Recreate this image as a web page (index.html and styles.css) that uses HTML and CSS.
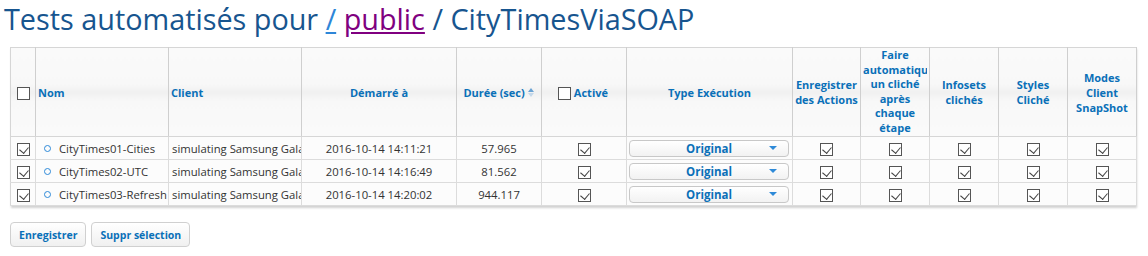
FILE: index.html
```html
<!DOCTYPE html>
<html lang="fr">

<head>
    <meta charset="UTF-8">
    <title>Tests automatisés</title>
    <link rel="stylesheet" href="styles.css">
</head>

<body>
    <h1 class="title">Tests automatisés pour <a href="#" class="root">/</a> <a href="#" class="visited">public</a> / CityTimesViaSOAP</h1>

    <div class="grid">
        <table>
            <colgroup>
                <col style="width:25px">
                <col style="width:133px">
                <col style="width:133px">
                <col style="width:155px">
                <col style="width:85px">
                <col style="width:85px">
                <col style="width:166px">
                <col style="width:68px">
                <col style="width:69px">
                <col style="width:69px">
                <col style="width:69px">
                <col style="width:69px">
            </colgroup>
            <thead>
                <tr>
                    <th class="center"><span class="box"></span></th>
                    <th class="left">Nom</th>
                    <th class="left">Client</th>
                    <th>Démarré à</th>
                    <th>Durée (sec) <span class="sort"><i class="up"></i><i class="down"></i></span></th>
                    <th class="left active"><span class="box"></span> Activé</th>
                    <th>Type Exécution</th>
                    <th>Enregistrer des Actions</th>
                    <th><div class="clip">Faire<br>automatique<br>un cliché<br>après<br>chaque<br>étape</div></th>
                    <th>Infosets clichés</th>
                    <th>Styles Cliché</th>
                    <th>Modes Client SnapShot</th>
                </tr>
            </thead>
            <tbody>
                <tr>
                    <td class="center"><span class="box checked"></span></td>
                    <td><span class="dot"></span>CityTimes01-Cities</td>
                    <td>simulating Samsung Galaxy S5</td>
                    <td class="center">2016-10-14 14:11:21</td>
                    <td class="center">57.965</td>
                    <td class="center"><span class="box checked"></span></td>
                    <td><div class="select">Original<span class="arrow"></span></div></td>
                    <td class="center"><span class="box checked"></span></td>
                    <td class="center"><span class="box checked"></span></td>
                    <td class="center"><span class="box checked"></span></td>
                    <td class="center"><span class="box checked"></span></td>
                    <td class="center"><span class="box checked"></span></td>
                </tr>
                <tr>
                    <td class="center"><span class="box checked"></span></td>
                    <td><span class="dot"></span>CityTimes02-UTC</td>
                    <td>simulating Samsung Galaxy S5</td>
                    <td class="center">2016-10-14 14:16:49</td>
                    <td class="center">81.562</td>
                    <td class="center"><span class="box checked"></span></td>
                    <td><div class="select">Original<span class="arrow"></span></div></td>
                    <td class="center"><span class="box checked"></span></td>
                    <td class="center"><span class="box checked"></span></td>
                    <td class="center"><span class="box checked"></span></td>
                    <td class="center"><span class="box checked"></span></td>
                    <td class="center"><span class="box checked"></span></td>
                </tr>
                <tr>
                    <td class="center"><span class="box checked"></span></td>
                    <td><span class="dot"></span>CityTimes03-Refresh</td>
                    <td>simulating Samsung Galaxy S5</td>
                    <td class="center">2016-10-14 14:20:02</td>
                    <td class="center">944.117</td>
                    <td class="center"><span class="box checked"></span></td>
                    <td><div class="select">Original<span class="arrow"></span></div></td>
                    <td class="center"><span class="box checked"></span></td>
                    <td class="center"><span class="box checked"></span></td>
                    <td class="center"><span class="box checked"></span></td>
                    <td class="center"><span class="box checked"></span></td>
                    <td class="center"><span class="box checked"></span></td>
                </tr>
            </tbody>
        </table>
    </div>

    <div class="actions">
        <button>Enregistrer</button>
        <button>Suppr sélection</button>
    </div>
</body>

</html>
```

FILE: styles.css
```css
body {
    margin: 0;
    padding: 0 0 0 10px;
    font-family: "Open Sans", "Noto Sans", sans-serif;
    background-color: #fff;
    color: #333;
}

.title {
    margin: 0 0 0 -6px;
    padding-top: 1px;
    height: 46px;
    font-size: 28.8px;
    font-weight: normal;
    line-height: 36px;
    color: #17558f;
    white-space: nowrap;
}

.title a.root {
    color: #2e86d8;
}

.title a.visited {
    color: #800080;
}

.grid {
    width: 1126px;
    box-shadow: 1px 2px 2px rgba(0, 0, 0, 0.18);
}

table {
    width: 1126px;
    table-layout: fixed;
    border-collapse: collapse;
    border: 1px solid #d6d6d6;
}

th {
    height: 88px;
    padding: 0 2px;
    font-size: 11px;
    font-weight: bold;
    line-height: 15px;
    color: #0a70b8;
    text-align: center;
    vertical-align: middle;
    border-right: 1px solid #cfcfcf;
    border-bottom: 1px solid #d6d6d6;
    background: linear-gradient(#fafafa 0%, #f8f8f8 40%, #f0f0f0 50%, #f8f8f8 60%, #fafafa 100%);
    overflow: hidden;
}

th.left {
    text-align: left;
}

th .clip {
    height: 88px;
    line-height: 14.6px;
    white-space: nowrap;
    overflow: hidden;
}

th.active {
    padding-left: 16px;
}

th.active .box {
    vertical-align: -3px;
}

td {
    height: 22px;
    padding: 0 3px;
    font-size: 11.3px;
    color: #333;
    white-space: nowrap;
    overflow: hidden;
    text-overflow: clip;
    border-right: 1px solid #dcdcdc;
    border-bottom: 1px solid #dcdcdc;
    background-color: #fcfcfc;
}

.center {
    text-align: center;
}

.box {
    display: inline-block;
    width: 11px;
    height: 11px;
    border: 1px solid #555;
    background-color: #fff;
    vertical-align: middle;
    position: relative;
}

.box.checked::after {
    content: "";
    position: absolute;
    left: 3px;
    top: 1px;
    width: 5px;
    height: 7px;
    border-right: 1px solid #444;
    border-bottom: 1px solid #444;
    transform: rotate(40deg);
}

.dot {
    display: inline-block;
    width: 5px;
    height: 5px;
    border: 1px solid #2e8ad8;
    border-radius: 50%;
    margin: 0 8px 0 5px;
    vertical-align: 1px;
}

.sort {
    display: inline-block;
    vertical-align: -1px;
    width: 7px;
    height: 10px;
    position: relative;
}

.sort i {
    position: absolute;
    left: 0;
    width: 0;
    height: 0;
    border-left: 3px solid transparent;
    border-right: 3px solid transparent;
}

.sort .up {
    top: 0;
    border-bottom: 4px solid #6aa3d4;
}

.sort .down {
    top: 5px;
    border-top: 4px solid #c4d8ea;
}

.select {
    position: relative;
    height: 15px;
    margin: 0 0 0 -1px;
    border: 1px solid #c8c8c8;
    border-radius: 4px;
    background: linear-gradient(#fff, #f2f2f2);
    font-size: 11.5px;
    font-weight: bold;
    line-height: 15px;
    color: #0a70b8;
    text-align: center;
}

.arrow {
    position: absolute;
    right: 11px;
    top: 5px;
    width: 0;
    height: 0;
    border-left: 4px solid transparent;
    border-right: 4px solid transparent;
    border-top: 4px solid #2e8ad8;
}

.actions {
    display: flex;
    gap: 5px;
    margin-top: 16px;
}

.actions button {
    height: 25px;
    padding: 0 8px;
    font-family: "Open Sans", "Noto Sans", sans-serif;
    font-size: 10.5px;
    font-weight: bold;
    color: #0a70b8;
    border: 1px solid #d0d0d0;
    border-radius: 4px;
    background: linear-gradient(#fff, #f0f0f0);
}
```
